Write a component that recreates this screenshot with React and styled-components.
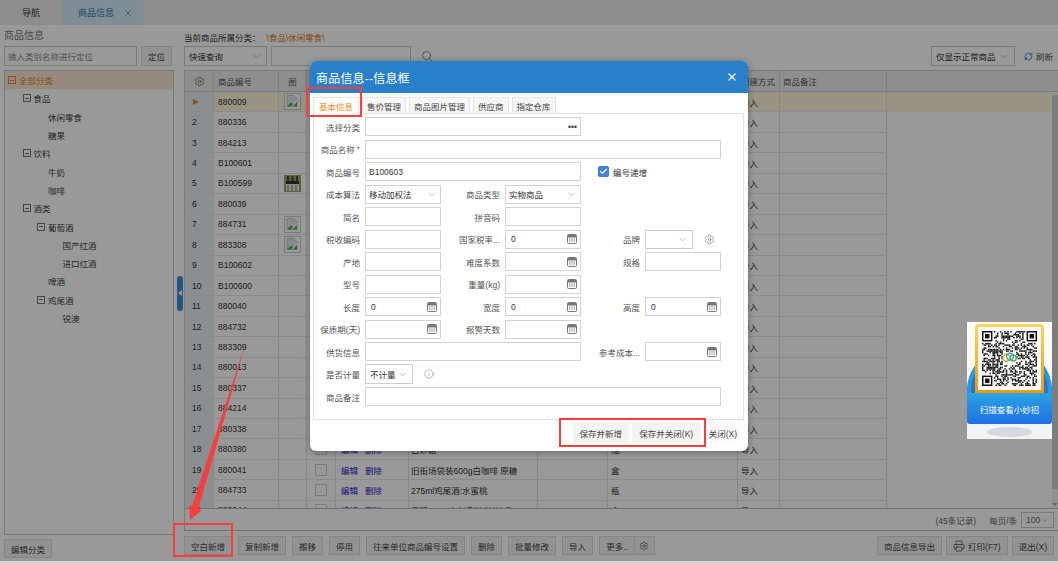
import React from "react";
import styled, { createGlobalStyle } from "styled-components";
import { ChevronDown, Info, Printer, RefreshCw, Search, Settings, X, Check } from "lucide-react";

const GlobalStyle = createGlobalStyle`
  html, body { margin: 0; padding: 0; background: #d4d4d4; }
  body {
    width: 1058px;
    height: 564px;
    overflow: hidden;
    font-family: "Liberation Sans", "Noto Sans CJK SC", sans-serif;
    font-size: 8.5px;
    color: #333;
  }
  * { box-sizing: border-box; }
`;

const Page = styled.div`
  position: relative;
  width: 1058px;
  height: 561px;
  background: #fff;
  display: flex;
  flex-direction: column;
`;

const TabBar = styled.div`
  height: 25px;
  background: #ececec;
  display: flex;
  flex-shrink: 0;
`;

const PageTab = styled.div`
  width: ${(p) => (p.$active ? "81px" : "62px")};
  display: flex;
  align-items: center;
  justify-content: ${(p) => (p.$active ? "flex-start" : "center")};
  padding-left: ${(p) => (p.$active ? "16px" : "0")};
  gap: 9px;
  font-size: 9px;
  background: ${(p) => (p.$active ? "#d6ebf7" : "transparent")};
  color: ${(p) => (p.$active ? "#2c78b8" : "#333")};
  svg { color: #2c78b8; }
`;

const Body = styled.div`
  flex: 1;
  display: flex;
  min-height: 0;
`;

const LeftPane = styled.div`
  width: 174px;
  padding-left: 4px;
  display: flex;
  flex-direction: column;
  flex-shrink: 0;
`;

const PaneTitle = styled.div`
  height: 21px;
  padding-top: 5px;
  font-size: 10px;
  line-height: 12px;
  color: #777;
`;

const SearchRow = styled.div`
  display: flex;
  gap: 4px;
  height: 20px;
  padding-right: 2px;
`;

const TextBox = styled.div`
  flex: ${(p) => (p.$w ? "none" : "1")};
  width: ${(p) => (p.$w ? `${p.$w}px` : "auto")};
  height: 100%;
  border: 1px solid #ccc;
  background: #fff;
  padding-left: 3px;
  display: flex;
  align-items: center;
  color: ${(p) => (p.$hint ? "#888" : "#333")};
`;

const Btn = styled.div`
  flex-shrink: 0;
  height: 19px;
  padding: 0 6px;
  display: flex;
  align-items: center;
  justify-content: center;
  gap: 3px;
  white-space: nowrap;
  background: #f4f4f4;
  border: 1px solid #ddd;
  color: #444;
`;

const LocateBtn = styled(Btn)`
  height: 20px;
`;

const TreeBox = styled.div`
  flex: 1;
  margin-top: 4px;
  border: 1px solid #ccc;
`;

const TreeRow = styled.div`
  height: 18.3px;
  display: flex;
  align-items: center;
  gap: 3px;
  padding-left: ${(p) => 3 + p.$level * 14.5}px;
  background: ${(p) => (p.$on ? "#fbe6d4" : "transparent")};
  color: ${(p) => (p.$on ? "#e8812a" : "#444")};
`;

const Fold = styled.span`
  width: 8px;
  height: 8px;
  border: 1px solid ${(p) => (p.$on ? "#e8812a" : "#777")};
  position: relative;
  visibility: ${(p) => (p.$leaf ? "hidden" : "visible")};
  &::after {
    content: "";
    position: absolute;
    left: 1px;
    right: 1px;
    top: 2.5px;
    height: 1px;
    background: ${(p) => (p.$on ? "#e8812a" : "#777")};
  }
`;

const LeftFoot = styled.div`
  height: 26px;
  padding-top: 4px;
  display: flex;
  align-items: flex-start;
`;

const Splitter = styled.div`
  width: 10px;
  flex-shrink: 0;
  display: flex;
  align-items: center;
  padding-left: 3px;
`;

const SplitHandle = styled.div`
  width: 6px;
  height: 35px;
  border-radius: 3px;
  background: #3d8ed0;
  display: flex;
  align-items: center;
  justify-content: center;
  &::after {
    content: "";
    border-style: solid;
    border-width: 3px 4px 3px 0;
    border-color: transparent #fff transparent transparent;
  }
`;

const RightPane = styled.div`
  flex: 1;
  min-width: 0;
  display: flex;
  flex-direction: column;
`;

const Crumb = styled.div`
  height: 21px;
  padding-top: 7px;
  line-height: 12px;
  display: flex;
  gap: 6px;
  span { color: #e07b20; }
`;

const QueryRow = styled.div`
  height: 20px;
  display: flex;
  align-items: center;
  gap: 4px;
  padding-right: 4px;
  svg.find { margin-left: 6px; color: #666; }
`;

const Select = styled.div`
  width: ${(p) => p.$w}px;
  height: ${(p) => p.$h || 20}px;
  flex-shrink: 0;
  border: 1px solid #ccc;
  background: #fff;
  padding: 0 4px;
  margin-left: ${(p) => (p.$push ? "auto" : "0")};
  display: flex;
  align-items: center;
  justify-content: space-between;
  white-space: nowrap;
  svg { color: #777; }
`;

const RefreshLink = styled.div`
  width: 35px;
  padding-left: 5px;
  display: flex;
  align-items: center;
  gap: 3px;
  color: #555;
  svg { color: #3f86cc; }
`;

const DataGrid = styled.div`
  margin-top: 4px;
  height: 461px;
  border-left: 1px solid #ccc;
  border-top: 1px solid #ccc;
  border-bottom: 1px solid #bbb;
  display: flex;
  flex-direction: column;
`;

const GridHead = styled.div`
  height: 21px;
  flex-shrink: 0;
  display: flex;
  background: #ededed;
  border-bottom: 1px solid #ccc;
`;

const GridScroll = styled.div`
  height: 417px;
  flex-shrink: 0;
  display: flex;
  overflow: hidden;
  border-bottom: 1px solid #bbb;
`;

const Rows = styled.div`
  flex: 1;
  min-width: 0;
`;

const GridRow = styled.div`
  height: 20.45px;
  display: flex;
  background: ${(p) => (p.$on ? "#fff6dc" : "transparent")};
`;

const Cell = styled.div`
  width: ${(p) => p.$w}px;
  flex-shrink: 0;
  height: 100%;
  padding-left: ${(p) => p.$pad}px;
  display: flex;
  align-items: center;
  gap: 7px;
  white-space: nowrap;
  overflow: hidden;
  justify-content: ${(p) => (p.$center ? "center" : "flex-start")};
  border-right: 1px solid #e2e2e2;
  border-bottom: 1px solid #e8e8e8;
  background: ${(p) => (p.$index ? "#e6eff4" : "transparent")};
`;

const HeadCell = styled(Cell)`
  border-bottom: none;
  border-right-color: #d4d4d4;
  color: #555;
  svg { color: #555; }
`;

const PlayMark = styled.span`
  margin-left: 1px;
  border-style: solid;
  border-width: 3px 0 3px 6px;
  border-color: transparent transparent transparent #e8812a;
`;

const Tick = styled.span`
  width: 12px;
  height: 12px;
  border: 1px solid #ccc;
  border-radius: 1px;
  background: #fff;
`;

const RowLink = styled.span`
  color: #2424cc;
`;

const ScrollTrack = styled.div`
  width: 6px;
  padding-top: 3px;
  flex-shrink: 0;
  display: flex;
  flex-direction: column;
  justify-content: space-between;
  background: #f2f2f2;
  &::before {
    content: "";
    display: block;
    height: 394px;
    background: #d0d0d0;
  }
  &::after {
    content: "";
    display: block;
    align-self: center;
    margin-bottom: 2px;
    border-style: solid;
    border-width: 3px 3px 0 3px;
    border-color: #aaa transparent transparent transparent;
  }
`;

const Pager = styled.div`
  flex: 1;
  display: flex;
  align-items: center;
  justify-content: flex-end;
  padding-right: 4px;
  gap: 13px;
  color: #666;
`;

const ToolBar = styled.div`
  height: 25px;
  padding-top: 5px;
  display: flex;
  gap: 6px;
`;

const ToolRight = styled.div`
  margin-left: auto;
  padding-right: 4px;
  display: flex;
  gap: 4px;
`;

const GearBtn = styled(Btn)`
  margin-left: -6px;
  width: 20px;
  padding: 0;
  border-left: none;
`;

const Shade = styled.div`
  position: absolute;
  left: 0;
  top: 0;
  width: 100%;
  height: 100%;
  background: rgba(0, 0, 0, 0.4);
`;

const Modal = styled.div`
  position: absolute;
  left: 310px;
  top: 61px;
  width: 438px;
  height: 390px;
  background: #fff;
  border-radius: 6px;
  overflow: hidden;
  box-shadow: 0 1px 6px rgba(0, 0, 0, 0.35);
  display: flex;
  flex-direction: column;
`;

const ModalHead = styled.div`
  height: 32px;
  flex-shrink: 0;
  background: #2a80c8;
  color: #fff;
  padding: 0 10px 0 6px;
  display: flex;
  align-items: center;
  justify-content: space-between;
  font-size: 12px;
  letter-spacing: 0.2px;
`;

const ModalTabs = styled.div`
  height: 21px;
  padding: 4px 0 0 3px;
  display: flex;
  gap: 3px;
  flex-shrink: 0;
`;

const ModalTab = styled.div`
  padding: 0 ${(p) => (p.$active ? "5px" : "4px")};
  display: flex;
  align-items: center;
  white-space: nowrap;
  border: 1px solid #e4e4e4;
  border-bottom: ${(p) => (p.$active ? "1px solid #fff" : "1px solid #e4e4e4")};
  background: ${(p) => (p.$active ? "#fff" : "#f6f6f6")};
  color: ${(p) => (p.$active ? "#f08a24" : "#444")};
  position: relative;
  z-index: 1;
`;

const TabPanel = styled.div`
  width: 431px;
  height: 307px;
  margin-left: 3px;
  margin-top: -1px;
  border: 1px solid #e2e2e2;
  padding-top: 3px;
  flex-shrink: 0;
`;

const FormGrid = styled.div`
  display: grid;
  grid-template-columns: 51px 76px 64px 76px 64px 76px;
  grid-auto-rows: 19px;
  row-gap: 3.5px;
`;

const Label = styled.div`
  grid-column: ${(p) => p.$col || "auto"};
  padding-right: 5px;
  display: flex;
  align-items: center;
  justify-content: flex-end;
  white-space: nowrap;
  color: #555;
  em { color: #e04040; font-style: normal; margin-left: 2px; }
`;

const Field = styled.div`
  grid-column: ${(p) => (p.$span ? `span ${p.$span}` : "auto")};
  border: 1px solid #d2d2d2;
  background: #fff;
  padding: 0 3px 0 ${(p) => (p.$num ? "5px" : "3px")};
  display: flex;
  align-items: center;
  justify-content: space-between;
  white-space: nowrap;
  color: #333;
  svg { color: #777; flex-shrink: 0; }
`;

const FieldTail = styled.div`
  grid-column: ${(p) => (p.$span ? `span ${p.$span}` : "auto")};
  display: flex;
  align-items: center;
  gap: ${(p) => p.$gap || 11}px;
  padding-left: ${(p) => p.$pad || 0}px;
  svg { color: #777; flex-shrink: 0; }
`;

const CheckMark = styled.span`
  width: 11px;
  height: 11px;
  border-radius: 2px;
  background: #3f7fe0;
  display: flex;
  align-items: center;
  justify-content: center;
  svg { color: #fff; }
`;

const ModalFoot = styled.div`
  flex: 1;
  padding: 3px 10px 0 0;
  display: flex;
  justify-content: flex-end;
  gap: 3px;
`;

const FootBtn = styled(Btn)`
  height: 20px;
  padding: 0 ${(p) => p.$pad}px;
  background: ${(p) => (p.$plain ? "#fafafa" : "#f3f3f3")};
  border: none;
  margin-left: ${(p) => (p.$gap ? "4px" : "0")};
`;

const RedBox = styled.div`
  position: absolute;
  left: ${(p) => p.$x}px;
  top: ${(p) => p.$y}px;
  width: ${(p) => p.$w}px;
  height: ${(p) => p.$h}px;
  border: 2.5px solid #f73f3f;
`;

const ArrowLayer = styled.svg`
  position: absolute;
  left: 0;
  top: 0;
  width: 1058px;
  height: 561px;
  pointer-events: none;
`;

const Widget = styled.div`
  position: absolute;
  left: 967px;
  top: 322px;
  width: 85px;
  height: 117px;
  background: linear-gradient(#fff, #f0f3f8);
  overflow: hidden;
  display: flex;
  flex-direction: column;
  align-items: center;
  padding-top: 2px;
`;

const WidgetDisc = styled.div`
  position: absolute;
  left: 0;
  top: 26px;
  width: 85px;
  height: 85px;
  border-radius: 50%;
  background: #1e78cc;
  box-shadow: inset 0 0 0 4px #2f96e0;
`;

const QrFrame = styled.div`
  position: relative;
  width: 69px;
  height: 69px;
  flex-shrink: 0;
  padding: 3px;
  border-radius: 4px 4px 0 0;
  background: linear-gradient(#ffd35a, #f5960f);
`;

const QrInner = styled.div`
  width: 100%;
  height: 100%;
  background: #fff;
  display: flex;
  align-items: center;
  justify-content: center;
`;

const WidgetBand = styled.div`
  position: relative;
  width: 85px;
  height: 31px;
  flex-shrink: 0;
  border-radius: 0 0 3px 3px;
  background: linear-gradient(#2aa4e2, #1f6fe6);
  color: #fff;
  display: flex;
  align-items: center;
  justify-content: center;
  font-size: 8.5px;
`;

const WidgetFoot = styled.div`
  position: relative;
  width: 100%;
  flex: 1;
  background: #f0f3f8;
  display: flex;
  align-items: center;
  justify-content: center;
  &::after {
    content: "";
    width: 45px;
    height: 10px;
    border-radius: 50%;
    background: #d5d9e0;
  }
`;

const cols = [
  { w: 29, pad: 7 },
  { w: 65, pad: 4 },
  { w: 28, pad: 0, center: true },
  { w: 29, pad: 0, center: true },
  { w: 73, pad: 5 },
  { w: 129, pad: 2 },
  { w: 70, pad: 3 },
  { w: 130, pad: 3 },
  { w: 42, pad: 3 },
  { w: 107, pad: 3 },
];

// columns from 操作 to 单位 lie under the dialog, so their titles are left out
const headers = ["", "商品编号", "图", "", "", "", "", "", "创建方式", "商品备注"];

const codes = [
  "880009", "880336", "884213", "B100601", "B100599", "880039", "884731", "883308", "B100602", "B100600", "880040",
  "884732", "883309", "880013", "880337", "884214", "880338", "880380", "880041", "884733", "880044",
];

const rowExtra = {
  18: { name: "白砂糖", unit: "瓶" },
  19: { name: "旧街场袋装600g白咖啡 原糖", unit: "盒" },
  20: { name: "275ml鸡尾酒:水蜜桃", unit: "瓶" },
  21: { name: "雪碧 330ml 大罐(箱装)饮品", unit: "盒" },
};

const treeItems = [
  { t: "全部分类", level: 0, on: true },
  { t: "食品", level: 1 },
  { t: "休闲零食", level: 2, leaf: true },
  { t: "糖果", level: 2, leaf: true },
  { t: "饮料", level: 1 },
  { t: "牛奶", level: 2, leaf: true },
  { t: "咖啡", level: 2, leaf: true },
  { t: "酒类", level: 1 },
  { t: "葡萄酒", level: 2 },
  { t: "国产红酒", level: 3, leaf: true },
  { t: "进口红酒", level: 3, leaf: true },
  { t: "啤酒", level: 2, leaf: true },
  { t: "鸡尾酒", level: 2 },
  { t: "锐澳", level: 3, leaf: true },
];

const toolButtons = ["空白新增", "复制新增", "搬移", "停用", "往来单位商品编号设置", "删除", "批量修改", "导入", "更多.."];

const CalcIcon = () => (
  <svg width="10" height="10" viewBox="0 0 10 10">
    <rect x="0.5" y="0.5" width="9" height="9" rx="1" fill="none" stroke="currentColor" />
    <rect x="1" y="1" width="8" height="2.5" fill="currentColor" />
    <path d="M2 5h1.4M4.3 5h1.4M6.6 5H8M2 7h1.4M4.3 7h1.4M6.6 7H8" stroke="currentColor" />
  </svg>
);

const BrokenImage = () => (
  <svg width="17" height="17" viewBox="0 0 17 17">
    <rect x="0.5" y="0.5" width="16" height="16" fill="#fff" stroke="#ccc" />
    <path d="M3 2.5h7l3 3v8H3z" fill="#dfe6ee" stroke="#a9b4c0" strokeWidth="0.6" />
    <path d="M3 13.5l4-4 3 2 3-2.5v4.5z" fill="#5aa84a" />
    <path d="M8 13.5l5-6" stroke="#fff" strokeWidth="1.2" />
  </svg>
);

const Thumb = () => (
  <svg width="17" height="17" viewBox="0 0 17 17">
    <rect width="17" height="17" fill="#8fa868" />
    <rect x="2" y="6" width="13" height="10" fill="#e8e8dc" />
    <rect x="2" y="6" width="13" height="3" fill="#333" />
    <path d="M4 1v5M8.5 1v5M13 1v5" stroke="#444" strokeWidth="2" />
    <path d="M4 10v6M8 10v6M12 10v6" stroke="#777" />
  </svg>
);

// modules of the code come from a small hash, the three corners are fixed
const qrCells = () => {
  const size = 37;
  const out = [];
  for (let y = 0; y < size; y++) {
    for (let x = 0; x < size; x++) {
      const h = Math.sin(x * 12.9898 + y * 78.233) * 43758.5453;
      const v = h - Math.floor(h);
      const corner = (x < 8 && y < 8) || (x > 28 && y < 8) || (x < 8 && y > 28);
      const logo = x > 13 && x < 23 && y > 13 && y < 23;
      if (!corner && !logo && v < 0.5) out.push([x, y]);
    }
  }
  return out;
};

const QrCode = () => (
  <svg width="55" height="55" viewBox="0 0 37 37">
    {qrCells().map(([x, y]) => (
      <rect key={`${x}-${y}`} x={x} y={y} width="1" height="1" fill="#111" />
    ))}
    {[[0, 0], [30, 0], [0, 30]].map(([x, y]) => (
      <g key={`${x}-${y}`}>
        <rect x={x + 0.5} y={y + 0.5} width="6" height="6" fill="#fff" stroke="#111" />
        <rect x={x + 2} y={y + 2} width="3" height="3" fill="#111" />
      </g>
    ))}
    <g fill="none" strokeWidth="1">
      <circle cx="16.4" cy="18" r="2.3" stroke="#f0a020" />
      <circle cx="18.8" cy="17.2" r="2.3" stroke="#3aa0e0" />
      <circle cx="21" cy="18.2" r="2" stroke="#50b050" />
    </g>
  </svg>
);

const NumField = ({ value }) => (
  <Field $num>
    <span>{value}</span>
    <CalcIcon />
  </Field>
);

const ProductForm = () => (
  <FormGrid>
    <Label>选择分类</Label>
    <Field $span={3}>
      <span />
      <span>•••</span>
    </Field>
    <FieldTail $span={2} />

    <Label>
      商品名称<em>*</em>
    </Label>
    <Field $span={5} />

    <Label>商品编号</Label>
    <Field $span={3}>B100603</Field>
    <FieldTail $span={2} $pad={17} $gap={4}>
      <CheckMark>
        <Check size={9} strokeWidth={3} />
      </CheckMark>
      编号递增
    </FieldTail>

    <Label>成本算法</Label>
    <Field>
      移动加权法
      <ChevronDown size={11} strokeWidth={1} />
    </Field>
    <Label>商品类型</Label>
    <Field>
      实物商品
      <ChevronDown size={11} strokeWidth={1} />
    </Field>
    <FieldTail $span={2} />

    <Label>简名</Label>
    <Field />
    <Label>拼音码</Label>
    <Field />
    <FieldTail $span={2} />

    <Label>税收编码</Label>
    <Field />
    <Label>国家税率...</Label>
    <NumField value="0" />
    <Label>品牌</Label>
    <FieldTail $gap={11}>
      <Select $w={48} $h={19}>
        <span />
        <ChevronDown size={11} strokeWidth={1} />
      </Select>
      <Settings size={11} strokeWidth={1.4} />
    </FieldTail>

    <Label>产地</Label>
    <Field />
    <Label>难度系数</Label>
    <NumField />
    <Label>规格</Label>
    <Field />

    <Label>型号</Label>
    <Field />
    <Label>重量(kg)</Label>
    <NumField />
    <FieldTail $span={2} />

    <Label>长度</Label>
    <NumField value="0" />
    <Label>宽度</Label>
    <NumField value="0" />
    <Label>高度</Label>
    <NumField value="0" />

    <Label>保质期(天)</Label>
    <NumField />
    <Label>报警天数</Label>
    <NumField />
    <FieldTail $span={2} />

    <Label>供货信息</Label>
    <Field $span={3} />
    <Label>参考成本...</Label>
    <NumField />

    <Label>是否计量</Label>
    <FieldTail $span={5} $gap={11}>
      <Select $w={48} $h={20}>
        不计量
        <ChevronDown size={11} strokeWidth={1} />
      </Select>
      <Info size={10} strokeWidth={1.2} />
    </FieldTail>

    <Label>商品备注</Label>
    <Field $span={5} />
  </FormGrid>
);

export default function App() {
  return (
    <>
      <GlobalStyle />
      <Page>
        <TabBar>
          <PageTab>导航</PageTab>
          <PageTab $active>
            商品信息
            <X size={10} strokeWidth={1.6} />
          </PageTab>
        </TabBar>
        <Body>
          <LeftPane>
            <PaneTitle>商品信息</PaneTitle>
            <SearchRow>
              <TextBox $hint>输入类别名称进行定位</TextBox>
              <LocateBtn>定位</LocateBtn>
            </SearchRow>
            <TreeBox>
              {treeItems.map((item) => (
                <TreeRow key={item.t} $level={item.level} $on={item.on}>
                  <Fold $leaf={item.leaf} $on={item.on} />
                  {item.t}
                </TreeRow>
              ))}
            </TreeBox>
            <LeftFoot>
              <Btn>编辑分类</Btn>
            </LeftFoot>
          </LeftPane>
          <Splitter>
            <SplitHandle />
          </Splitter>
          <RightPane>
            <Crumb>
              当前商品所属分类：<span>\食品\休闲零食\</span>
            </Crumb>
            <QueryRow>
              <Select $w={83}>
                快速查询
                <ChevronDown size={11} strokeWidth={1} />
              </Select>
              <TextBox $w={140} />
              <Search className="find" size={12} strokeWidth={1.5} />
              <Select $w={84} $push>
                仅显示正常商品
                <ChevronDown size={11} strokeWidth={1} />
              </Select>
              <RefreshLink>
                <RefreshCw size={9} strokeWidth={2.5} />
                刷新
              </RefreshLink>
            </QueryRow>
            <DataGrid>
              <GridHead>
                {cols.map((c, i) => (
                  <HeadCell key={i} $w={c.w} $pad={i === 0 ? 0 : c.pad} $center={i === 0 || c.center}>
                    {i === 0 ? <Settings size={11} strokeWidth={1.3} /> : headers[i]}
                  </HeadCell>
                ))}
              </GridHead>
              <GridScroll>
                <Rows>
                  {codes.map((code, i) => {
                    const no = i + 1;
                    const extra = rowExtra[no] || {};
                    return (
                      <GridRow key={code} $on={no === 1}>
                        <Cell $w={29} $pad={7} $index>
                          {no === 1 ? <PlayMark /> : no}
                        </Cell>
                        <Cell $w={65} $pad={4}>{code}</Cell>
                        <Cell $w={28} $pad={0} $center>
                          {[1, 7, 8].includes(no) && <BrokenImage />}
                          {no === 5 && <Thumb />}
                        </Cell>
                        <Cell $w={29} $pad={0} $center>
                          <Tick />
                        </Cell>
                        <Cell $w={73} $pad={5}>
                          {no >= 18 && <RowLink>编辑</RowLink>}
                          {no >= 18 && <RowLink>删除</RowLink>}
                        </Cell>
                        <Cell $w={129} $pad={2}>{extra.name}</Cell>
                        <Cell $w={70} $pad={3} />
                        <Cell $w={130} $pad={3}>{extra.unit}</Cell>
                        <Cell $w={42} $pad={3}>导入</Cell>
                        <Cell $w={107} $pad={3} />
                      </GridRow>
                    );
                  })}
                </Rows>
                <ScrollTrack />
              </GridScroll>
              <Pager>
                <span>(45条记录)</span>
                <FieldTail $gap={4}>
                  每页/条
                  <Select $w={33} $h={16}>
                    100
                    <ChevronDown size={10} strokeWidth={1} />
                  </Select>
                </FieldTail>
              </Pager>
            </DataGrid>
            <ToolBar>
              {toolButtons.map((b) => (
                <Btn key={b}>{b}</Btn>
              ))}
              <GearBtn>
                <Settings size={10} strokeWidth={1.4} />
              </GearBtn>
              <ToolRight>
                <Btn>商品信息导出</Btn>
                <Btn>
                  <Printer size={12} strokeWidth={1.5} />
                  打印(F7)
                </Btn>
                <Btn>退出(X)</Btn>
              </ToolRight>
            </ToolBar>
          </RightPane>
        </Body>
        <Shade />
        <Modal>
          <ModalHead>
            商品信息--信息框
            <X size={12} strokeWidth={2.4} />
          </ModalHead>
          <ModalTabs>
            <ModalTab $active>基本信息</ModalTab>
            <ModalTab>售价管理</ModalTab>
            <ModalTab>商品图片管理</ModalTab>
            <ModalTab>供应商</ModalTab>
            <ModalTab>指定仓库</ModalTab>
          </ModalTabs>
          <TabPanel>
            <ProductForm />
          </TabPanel>
          <ModalFoot>
            <FootBtn $pad={6.75}>保存并新增</FootBtn>
            <FootBtn $pad={7.5}>保存并关闭(K)</FootBtn>
            <FootBtn $plain $pad={1} $gap>
              关闭(X)
            </FootBtn>
          </ModalFoot>
        </Modal>
        <RedBox $x={306} $y={87} $w={56} $h={30} />
        <RedBox $x={559} $y={418} $w={147} $h={29} />
        <RedBox $x={173} $y={523} $w={60} $h={34} />
        <ArrowLayer viewBox="0 0 1058 561">
          <polygon points="246,342 199,507 201,511 190,520 189,506 192,506" fill="#f73f3f" />
        </ArrowLayer>
        <Widget>
          <WidgetDisc />
          <QrFrame>
            <QrInner>
              <QrCode />
            </QrInner>
          </QrFrame>
          <WidgetBand>扫描查看小妙招</WidgetBand>
          <WidgetFoot />
        </Widget>
      </Page>
    </>
  );
}
